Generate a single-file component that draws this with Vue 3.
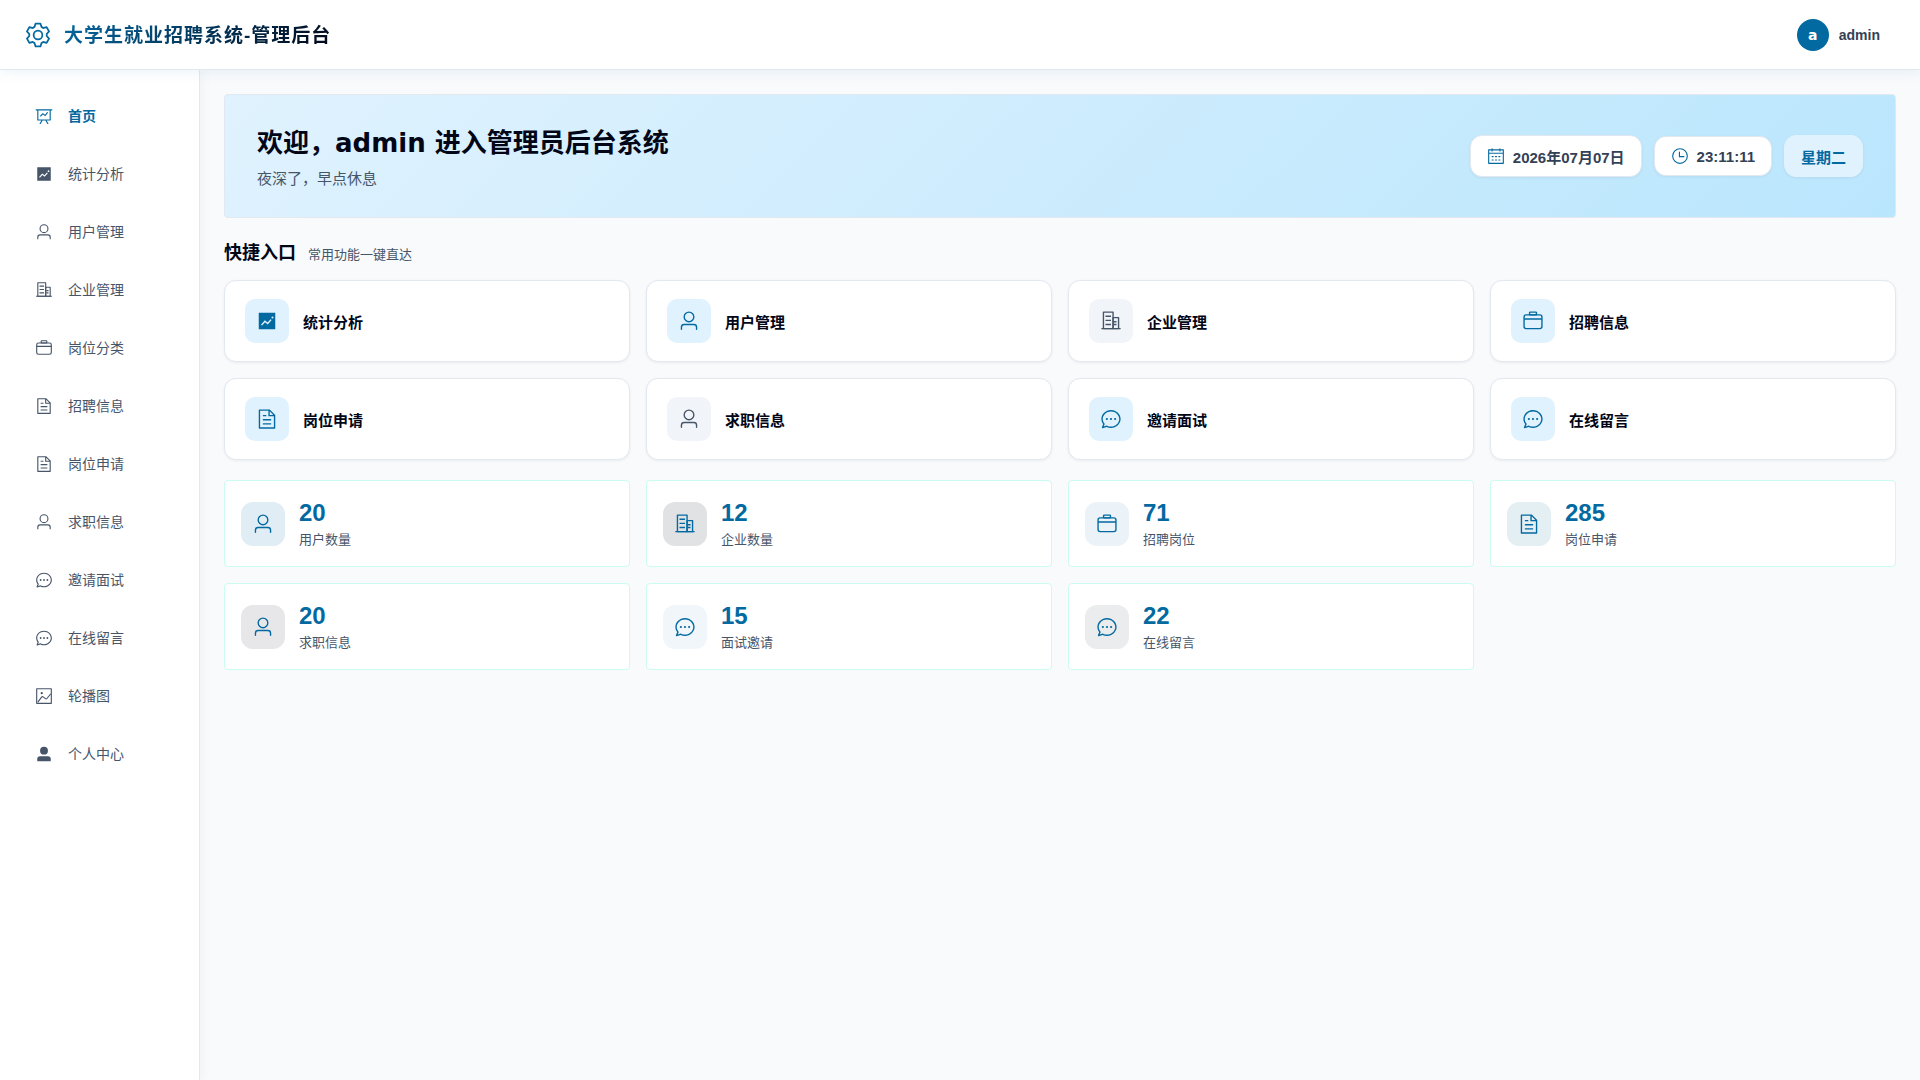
<template>
  <div class="admin-layout">
    <header class="top-header">
      <div class="brand">
        <svg class="brand-icon" viewBox="0 0 1024 1024" aria-hidden="true">
          <path v-for="d in icons.setting" :key="d" :d="d" />
        </svg>
        <span class="brand-title">大学生就业招聘系统-管理后台</span>
      </div>
      <button type="button" class="user-info">
        <span class="user-avatar">a</span>
        <span class="user-name">admin</span>
      </button>
    </header>

    <div class="layout-body">
      <nav class="sidebar">
        <a
          v-for="item in menus"
          :key="item.name"
          href="#"
          class="menu-item"
          :class="{ active: activeMenu === item.name }"
          @click.prevent="activeMenu = item.name"
        >
          <svg class="menu-icon" viewBox="0 0 1024 1024" aria-hidden="true">
            <path v-for="d in icons[item.icon]" :key="d" :d="d" />
          </svg>
          <span class="menu-name">{{ item.name }}</span>
        </a>
      </nav>

      <main class="main-content">
        <section class="welcome-banner">
          <div class="welcome-text">
            <h1>欢迎，{{ username }} 进入管理员后台系统</h1>
            <p>夜深了，早点休息</p>
          </div>
          <div class="welcome-time">
            <div class="time-chip">
              <svg class="chip-icon" viewBox="0 0 1024 1024" aria-hidden="true">
                <path v-for="d in icons.calendar" :key="d" :d="d" />
              </svg>
              <span>2026年07月07日</span>
            </div>
            <div class="time-chip clock">
              <svg class="chip-icon" viewBox="0 0 1024 1024" aria-hidden="true">
                <path v-for="d in icons.clock" :key="d" :d="d" />
              </svg>
              <span>23:11:11</span>
            </div>
            <div class="time-chip week">星期二</div>
          </div>
        </section>

        <div class="section-head">
          <h2>快捷入口</h2>
          <span>常用功能一键直达</span>
        </div>

        <div class="card-grid">
          <a v-for="item in shortcuts" :key="item.name" href="#" class="quick-card" @click.prevent>
            <span class="icon-box" :class="{ muted: item.muted }">
              <svg viewBox="0 0 1024 1024" aria-hidden="true">
                <path v-for="d in icons[item.icon]" :key="d" :d="d" />
              </svg>
            </span>
            <span class="quick-name">{{ item.name }}</span>
          </a>
        </div>

        <div class="card-grid stats">
          <div v-for="(item, index) in stats" :key="item.label" class="stat-card">
            <span class="icon-box" :class="'tone-' + (index + 1)">
              <svg viewBox="0 0 1024 1024" aria-hidden="true">
                <path v-for="d in icons[item.icon]" :key="d" :d="d" />
              </svg>
            </span>
            <div class="stat-info">
              <div class="stat-value">{{ item.value }}</div>
              <div class="stat-label">{{ item.label }}</div>
            </div>
          </div>
        </div>
      </main>
    </div>
  </div>
</template>

<script setup>
import { ref } from 'vue'

const username = ref('admin')
const activeMenu = ref('首页')

const menus = [
  { name: '首页', icon: 'dataLine' },
  { name: '统计分析', icon: 'trend' },
  { name: '用户管理', icon: 'user' },
  { name: '企业管理', icon: 'office' },
  { name: '岗位分类', icon: 'suitcase' },
  { name: '招聘信息', icon: 'document' },
  { name: '岗位申请', icon: 'document' },
  { name: '求职信息', icon: 'user' },
  { name: '邀请面试', icon: 'chat' },
  { name: '在线留言', icon: 'chat' },
  { name: '轮播图', icon: 'picture' },
  { name: '个人中心', icon: 'userFilled' }
]

const shortcuts = [
  { name: '统计分析', icon: 'trend' },
  { name: '用户管理', icon: 'user' },
  { name: '企业管理', icon: 'office', muted: true },
  { name: '招聘信息', icon: 'suitcase' },
  { name: '岗位申请', icon: 'document' },
  { name: '求职信息', icon: 'user', muted: true },
  { name: '邀请面试', icon: 'chat' },
  { name: '在线留言', icon: 'chat' }
]

const stats = ref([
  { label: '用户数量', value: 20, icon: 'user' },
  { label: '企业数量', value: 12, icon: 'office' },
  { label: '招聘岗位', value: 71, icon: 'suitcase' },
  { label: '岗位申请', value: 285, icon: 'document' },
  { label: '求职信息', value: 20, icon: 'user' },
  { label: '面试邀请', value: 15, icon: 'chat' },
  { label: '在线留言', value: 22, icon: 'chat' }
])

// 图标路径，画布统一为 1024
const icons = {
  setting: [
    'M600.704 64a32 32 0 0 1 30.464 22.208l35.2 109.376c14.784 7.232 28.928 15.36 42.432 24.512l112.384-24.192a32 32 0 0 1 34.432 15.36L944.32 364.8a32 32 0 0 1-4.032 37.504l-77.12 85.12a357.12 357.12 0 0 1 0 49.024l77.12 85.248a32 32 0 0 1 4.032 37.504l-88.704 153.6a32 32 0 0 1-34.432 15.296L708.8 803.904c-13.44 9.088-27.648 17.28-42.368 24.512l-35.264 109.376A32 32 0 0 1 600.704 960H423.296a32 32 0 0 1-30.464-22.208L357.696 828.48a351.616 351.616 0 0 1-42.56-24.64l-112.32 24.256a32 32 0 0 1-34.432-15.36L79.68 659.2a32 32 0 0 1 4.032-37.504l77.12-85.248a357.12 357.12 0 0 1 0-48.896l-77.12-85.248A32 32 0 0 1 79.68 364.8l88.704-153.6a32 32 0 0 1 34.432-15.296l112.32 24.256c13.568-9.152 27.776-17.408 42.56-24.64l35.2-109.312A32 32 0 0 1 423.232 64H600.64zm-23.424 64H446.72l-36.352 113.088-24.512 11.968a294.113 294.113 0 0 0-34.816 20.096l-22.656 15.36-116.224-25.088-65.28 113.152 79.68 88.192-1.92 27.136a293.12 293.12 0 0 0 0 40.192l1.92 27.136-79.808 88.192 65.344 113.152 116.224-25.024 22.656 15.296a294.113 294.113 0 0 0 34.816 20.096l24.512 11.968L446.72 896h130.688l36.48-113.152 24.448-11.904a288.282 288.282 0 0 0 34.752-20.096l22.592-15.296 116.288 25.024 65.28-113.152-79.744-88.192 1.92-27.136a293.12 293.12 0 0 0 0-40.256l-1.92-27.136 79.808-88.128-65.344-113.152-116.288 24.96-22.592-15.232a287.616 287.616 0 0 0-34.752-20.096l-24.448-11.904L577.344 128zM512 320a192 192 0 1 1 0 384 192 192 0 0 1 0-384m0 64a128 128 0 1 0 0 256 128 128 0 0 0 0-256'
  ],
  dataLine: [
    'M359.168 768H160a32 32 0 0 1-32-32V192H64a32 32 0 0 1 0-64h896a32 32 0 1 1 0 64h-64v544a32 32 0 0 1-32 32H665.216l110.848 192h-73.856L591.36 768H433.024L322.176 960H248.32zM832 192H192v512h640zM342.656 534.656a32 32 0 1 1-45.312-45.312L444.992 341.76l125.44 94.08L679.04 300.032a32 32 0 1 1 49.92 39.936L581.632 524.224 451.008 426.24 342.656 534.592z'
  ],
  trend: [
    'M128 896V128h768v768zm291.712-327.296 128 102.4 180.16-201.792-47.744-42.624-139.84 156.608-128-102.4-180.16 201.792 47.744 42.624zM816 352a48 48 0 1 0-96 0 48 48 0 0 0 96 0'
  ],
  user: [
    'M512 512a192 192 0 1 0 0-384 192 192 0 0 0 0 384m0 64a256 256 0 1 1 0-512 256 256 0 0 1 0 512m320 320v-96a96 96 0 0 0-96-96H288a96 96 0 0 0-96 96v96a32 32 0 1 1-64 0v-96a160 160 0 0 1 160-160h448a160 160 0 0 1 160 160v96a32 32 0 1 1-64 0'
  ],
  office: [
    'M192 128v704h384V128zm-32-64h448a32 32 0 0 1 32 32v768a32 32 0 0 1-32 32H160a32 32 0 0 1-32-32V96a32 32 0 0 1 32-32',
    'M256 256h256v64H256zm0 192h256v64H256zm0 192h256v64H256zm384-128h128v64H640zm0 128h128v64H640zM64 832h896v64H64z',
    'M640 384v448h192V384zm-32-64h256a32 32 0 0 1 32 32v512a32 32 0 0 1-32 32H608a32 32 0 0 1-32-32V352a32 32 0 0 1 32-32'
  ],
  suitcase: [
    'M128 384h768v-64a64 64 0 0 0-64-64H192a64 64 0 0 0-64 64zm0 64v320a64 64 0 0 0 64 64h640a64 64 0 0 0 64-64V448zm64-256h640a128 128 0 0 1 128 128v448a128 128 0 0 1-128 128H192A128 128 0 0 1 64 768V320a128 128 0 0 1 128-128',
    'M384 128v64h256v-64zm0-64h256a64 64 0 0 1 64 64v64a64 64 0 0 1-64 64H384a64 64 0 0 1-64-64v-64a64 64 0 0 1 64-64'
  ],
  document: [
    'M832 384H576V128H192v768h640zm-26.496-64L640 154.496V320zM160 64h480l256 256v608a32 32 0 0 1-32 32H160a32 32 0 0 1-32-32V96a32 32 0 0 1 32-32m160 448h384v64H320zm0-192h160v64H320zm0 384h384v64H320z'
  ],
  chat: [
    'm174.72 855.68 135.296-45.12 23.68 11.84C388.096 849.536 448.576 864 512 864c211.84 0 384-166.784 384-352S723.84 160 512 160 128 326.784 128 512c0 69.12 24.96 139.264 70.848 199.232l22.08 28.8-46.272 115.584zm-45.248 82.56A32 32 0 0 1 89.6 896l58.368-145.92C94.72 680.32 64 596.864 64 512 64 299.904 256 96 512 96s448 203.904 448 416-192 416-448 416a461.056 461.056 0 0 1-206.912-48.384l-175.616 58.56z',
    'M512 563.2a51.2 51.2 0 1 1 0-102.4 51.2 51.2 0 0 1 0 102.4m192 0a51.2 51.2 0 1 1 0-102.4 51.2 51.2 0 0 1 0 102.4m-384 0a51.2 51.2 0 1 1 0-102.4 51.2 51.2 0 0 1 0 102.4'
  ],
  picture: [
    'M128 128v768h768V128zm-32-64h832a32 32 0 0 1 32 32v832a32 32 0 0 1-32 32H96a32 32 0 0 1-32-32V96a32 32 0 0 1 32-32',
    'M384 288q64 0 64 64t-64 64-64-64 64-64M185.408 876.992l-50.816-38.912L350.72 556.032a96 96 0 0 1 134.592-17.856l1.856 1.472 122.88 99.136a32 32 0 0 0 44.992-4.864l216-269.888 49.92 39.936-215.808 269.824-.256.32a96 96 0 0 1-135.04 14.464l-122.88-99.072-.64-.512a32 32 0 0 0-44.8 5.952z'
  ],
  userFilled: [
    'M288 320a224 224 0 1 0 448 0 224 224 0 1 0-448 0m544 608H160a32 32 0 0 1-32-32v-96a160 160 0 0 1 160-160h448a160 160 0 0 1 160 160v96a32 32 0 0 1-32 32z'
  ],
  calendar: [
    'M128 384v512h768V192H768v32a32 32 0 1 1-64 0v-32H320v32a32 32 0 0 1-64 0v-32H128v128h768v64zm192-256h384V96a32 32 0 1 1 64 0v32h160a32 32 0 0 1 32 32v768a32 32 0 0 1-32 32H96a32 32 0 0 1-32-32V160a32 32 0 0 1 32-32h160V96a32 32 0 0 1 64 0zm-32 384h64a32 32 0 0 1 0 64h-64a32 32 0 0 1 0-64m0 192h64a32 32 0 1 1 0 64h-64a32 32 0 1 1 0-64m192-192h64a32 32 0 0 1 0 64h-64a32 32 0 0 1 0-64m0 192h64a32 32 0 1 1 0 64h-64a32 32 0 1 1 0-64m192-192h64a32 32 0 1 1 0 64h-64a32 32 0 1 1 0-64m0 192h64a32 32 0 1 1 0 64h-64a32 32 0 1 1 0-64'
  ],
  clock: [
    'M512 896a384 384 0 1 0 0-768 384 384 0 0 0 0 768m0 64a448 448 0 1 1 0-896 448 448 0 0 1 0 896',
    'M480 256a32 32 0 0 1 32 32v256a32 32 0 0 1-64 0V288a32 32 0 0 1 32-32',
    'M480 512h256q32 0 32 32t-32 32H480q-32 0-32-32t32-32'
  ]
}
</script>

<style>
body {
  margin: 0;
  background: #f8fafc;
}
</style>

<style scoped>
.admin-layout {
  min-height: 100vh;
  display: flex;
  flex-direction: column;
  font-family: "Liberation Sans", "Noto Sans CJK SC", sans-serif;
  color: #020617;
}

.admin-layout * {
  box-sizing: border-box;
}

svg {
  display: block;
  flex-shrink: 0;
  fill: currentColor;
}

a {
  text-decoration: none;
}

/* 顶部栏 */
.top-header {
  position: relative;
  z-index: 2;
  height: 70px;
  padding: 0 40px 0 24px;
  display: flex;
  align-items: center;
  justify-content: space-between;
  background: #fff;
  border-bottom: 1px solid #e2e8f0;
  box-shadow: 0 2px 12px rgba(3, 105, 161, 0.08);
}

.brand {
  display: flex;
  align-items: center;
  gap: 12px;
}

.brand-icon {
  width: 28px;
  height: 28px;
  color: #0369a1;
}

.brand-title {
  padding-top: 3px;
  font-size: 19px;
  font-weight: 700;
  line-height: 28px;
  letter-spacing: 1px;
  background: linear-gradient(135deg, #0369a1, #020617);
  -webkit-background-clip: text;
  background-clip: text;
  color: transparent;
}

.user-info {
  display: flex;
  align-items: center;
  gap: 10px;
  padding: 0;
  border: none;
  background: none;
  font-family: inherit;
  cursor: pointer;
}

.user-avatar {
  width: 32px;
  height: 32px;
  border-radius: 50%;
  display: flex;
  align-items: center;
  justify-content: center;
  background: #0369a1;
  color: #fff;
  font-family: "DejaVu Sans", sans-serif;
  font-size: 14px;
  font-weight: 700;
}

.user-name {
  font-size: 14px;
  font-weight: 600;
  color: #334155;
}

.layout-body {
  flex: 1;
  display: flex;
}

/* 侧边菜单 */
.sidebar {
  position: relative;
  z-index: 1;
  width: 200px;
  flex-shrink: 0;
  padding: 21px 12px;
  display: flex;
  flex-direction: column;
  gap: 8px;
  background: #fff;
  border-right: 1px solid #e2e8f0;
  box-shadow: 2px 0 12px rgba(15, 23, 42, 0.04);
}

.menu-item {
  height: 50px;
  padding: 0 23px;
  display: flex;
  align-items: center;
  gap: 15px;
  font-size: 14px;
  color: #475569;
}

.menu-name {
  padding-bottom: 2px;
}

.menu-item.active {
  color: #0369a1;
  font-weight: 600;
}

.menu-icon {
  width: 18px;
  height: 18px;
}

/* 主内容 */
.main-content {
  flex: 1;
  min-width: 0;
  padding: 24px;
}

.welcome-banner {
  padding: 28px 32px;
  display: flex;
  align-items: center;
  justify-content: space-between;
  background: linear-gradient(135deg, #e0f2fe, #bae6fd);
  border: 1px solid #e2e8f0;
  border-radius: 4px;
}

.welcome-text h1 {
  margin: 0 0 6px;
  font-family: "DejaVu Sans", "Noto Sans CJK SC", sans-serif;
  font-size: 26px;
  font-weight: 700;
  line-height: 40px;
}

.welcome-text p {
  margin: 0;
  font-size: 15px;
  line-height: 20px;
  color: #475569;
}

.welcome-time {
  display: flex;
  align-items: center;
  gap: 12px;
}

.time-chip {
  height: 42px;
  padding: 0 16px;
  display: flex;
  align-items: center;
  gap: 8px;
  background: #fff;
  border: 1px solid #e2e8f0;
  border-radius: 12px;
  box-shadow: 0 1px 3px rgba(15, 23, 42, 0.06);
  font-size: 15px;
  font-weight: 600;
  color: #334155;
}

.time-chip.clock {
  height: 40px;
}

.time-chip.week {
  background: #e0f2fe;
  border-color: #e0f2fe;
  color: #0369a1;
}

.chip-icon {
  width: 18px;
  height: 18px;
  color: #0369a1;
}

.section-head {
  height: 28px;
  margin: 20px 0 14px;
  display: flex;
  align-items: baseline;
  gap: 12px;
}

.section-head h2 {
  margin: 0;
  font-size: 18px;
  font-weight: 700;
  line-height: 30px;
}

.section-head span {
  font-size: 13px;
  color: #475569;
}

.card-grid {
  display: grid;
  grid-template-columns: repeat(4, 1fr);
  gap: 16px;
}

.card-grid.stats {
  margin-top: 20px;
}

.quick-card {
  padding: 18px 20px;
  display: flex;
  align-items: center;
  gap: 14px;
  background: #fff;
  border: 1px solid #e2e8f0;
  border-radius: 12px;
  box-shadow: 0 1px 3px rgba(15, 23, 42, 0.06);
  color: #020617;
}

.quick-name {
  font-size: 15px;
  font-weight: 700;
}

.icon-box {
  width: 44px;
  height: 44px;
  flex-shrink: 0;
  display: flex;
  align-items: center;
  justify-content: center;
  border-radius: 10px;
  background: #e0f2fe;
  color: #0369a1;
}

.icon-box svg {
  width: 22px;
  height: 22px;
}

.icon-box.muted {
  background: #f1f5f9;
  color: #475569;
}

.stat-card {
  padding: 16px;
  display: flex;
  align-items: center;
  gap: 14px;
  background: #fff;
  border: 1px solid #ccfbf1;
  border-radius: 4px;
}

.stat-card .icon-box {
  border-radius: 12px;
}

.tone-1 {
  background: #e0edf5;
}

.tone-2 {
  background: #e1e2e4;
}

.tone-3 {
  background: #ebf2f8;
}

.tone-4 {
  background: #e4eff4;
}

.tone-5 {
  background: #e7e7e9;
}

.tone-6 {
  background: #f0f6fa;
}

.tone-7 {
  background: #ebeced;
}

.stat-value {
  font-size: 24px;
  font-weight: 700;
  line-height: 31px;
  color: #0369a1;
}

.stat-label {
  margin-top: 2px;
  font-size: 13px;
  line-height: 20px;
  color: #475569;
}
</style>
